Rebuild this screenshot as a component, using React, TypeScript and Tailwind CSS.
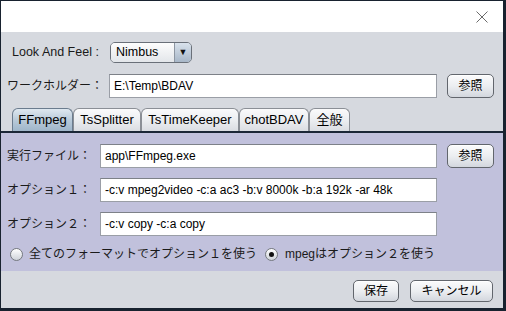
const font = { fontFamily: '"Liberation Sans", "Noto Sans CJK JP", sans-serif' };

const Field = (props: { value: string; className?: string }) => (
  <div
    className={`h-[24px] flex items-center px-[4px] bg-white border border-[#9a9ea6] border-t-[#7d8188] text-[12px] text-black whitespace-nowrap overflow-hidden ${props.className ?? ""}`}
  >
    {props.value}
  </div>
);

const Button = (props: { label: string; className?: string }) => (
  <div
    className={`shrink-0 flex items-center justify-center rounded-[5px] border border-[#62666d] bg-gradient-to-b from-[#fbfbfc] via-[#eceef1] to-[#d3d7de] text-[12px] text-black shadow-[inset_0_1px_0_#ffffff] whitespace-nowrap ${props.className ?? ""}`}
  >
    {props.label}
  </div>
);

const Tab = (props: { label: string; selected?: boolean; width: string }) => (
  <div
    className={`shrink-0 h-[23px] flex items-center justify-center rounded-t-[6px] border border-b-0 text-[13px] text-black whitespace-nowrap ${props.width} ${
      props.selected
        ? "border-[#6b7c8e] bg-gradient-to-b from-[#dfe8f0] via-[#b9cad9] to-[#9fb6ca]"
        : "border-[#8b8f96] bg-gradient-to-b from-[#fafafb] via-[#eceef1] to-[#dadde2]"
    }`}
  >
    {props.label}
  </div>
);

const Radio = (props: { checked?: boolean }) => (
  <div className="shrink-0 w-[13px] h-[13px] rounded-full border border-[#75797f] bg-gradient-to-b from-[#ffffff] to-[#cfd3da] flex items-center justify-center">
    {props.checked && <div className="w-[5px] h-[5px] rounded-full bg-[#111]" />}
  </div>
);

const Label = (props: { text: string; width: string }) => (
  <span className={`shrink-0 whitespace-nowrap text-[12px] text-[#1a1a1a] ${props.width}`}>{props.text}</span>
);

export default function App() {
  return (
    <div style={font} className="w-[506px] h-[311px] bg-[#18222f] pt-px pl-px pr-[3px] pb-[3px]">
      <div className="flex flex-col h-full bg-[#d6d9df]">
        <div className="shrink-0 h-[31px] bg-white flex items-center justify-end pr-[15px]">
          <svg width="12" height="12" viewBox="0 0 12 12" className="mt-[1px]">
            <path d="M0.5 0.5 L11.5 11.5 M11.5 0.5 L0.5 11.5" stroke="#6a6a6a" strokeWidth="1" />
          </svg>
        </div>

        <div className="shrink-0 flex items-center mt-[10px] pl-[11px] h-[21px]">
          <span className="shrink-0 w-[98px] whitespace-nowrap text-[12.5px] text-[#1a1a1a]">Look And Feel :</span>
          <div className="w-[82px] h-[21px] flex rounded-[5px] border border-[#6a7079] overflow-hidden">
            <div className="flex-1 flex items-center pl-[5px] text-[12.5px] bg-gradient-to-b from-[#fdfdfd] to-[#e3e6ea]">
              Nimbus
            </div>
            <div className="w-[17px] flex items-center justify-center border-l border-[#8d96a2] bg-gradient-to-b from-[#d9e2ec] to-[#a8b7c8] text-[9px] text-[#111]">
              ▼
            </div>
          </div>
        </div>

        <div className="shrink-0 flex items-center mt-[11px] pl-[6px] pr-[9px] gap-[10px]">
          <Label text="ワークホルダー：" width="w-[92px]" />
          <Field value="E:\Temp\BDAV" className="flex-1" />
          <Button label="参照" className="w-[47px] h-[24px]" />
        </div>

        <div className="shrink-0 flex items-end mt-[10px] pl-[11px] border-b-2 border-[#1b2737]">
          <Tab label="FFmpeg" selected width="w-[61px]" />
          <Tab label="TsSplitter" width="w-[68px]" />
          <Tab label="TsTimeKeeper" width="w-[98px]" />
          <Tab label="chotBDAV" width="w-[70px]" />
          <Tab label="全般" width="w-[41px]" />
        </div>

        <div className="shrink-0 bg-[#c1c1dc] flex flex-col pt-[11px] pl-[6px] pr-[9px] pb-[9px] gap-[10px]">
          <div className="flex items-center gap-[10px]">
            <Label text="実行ファイル：" width="w-[83px]" />
            <Field value="app\FFmpeg.exe" className="flex-1" />
            <Button label="参照" className="w-[47px] h-[24px]" />
          </div>
          <div className="flex items-center gap-[10px] pr-[57px]">
            <Label text="オプション１：" width="w-[83px]" />
            <Field value="-c:v mpeg2video -c:a ac3 -b:v 8000k -b:a 192k -ar 48k" className="flex-1" />
          </div>
          <div className="flex items-center gap-[10px] pr-[57px]">
            <Label text="オプション２：" width="w-[83px]" />
            <Field value="-c:v copy -c:a copy" className="flex-1 h-[23px]" />
          </div>
          <div className="flex items-center h-[16px] pl-[3px] text-[12px] text-[#1a1a1a] whitespace-nowrap">
            <Radio />
            <span className="ml-[6px] w-[236px] shrink-0">全てのフォーマットでオプション１を使う</span>
            <Radio checked />
            <span className="ml-[7px]">mpegはオプション２を使う</span>
          </div>
        </div>

        <div className="shrink-0 flex justify-end items-center gap-[11px] pr-[10px] mt-[9px]">
          <Button label="保存" className="w-[46px] h-[22px]" />
          <Button label="キャンセル" className="w-[83px] h-[22px]" />
        </div>
      </div>
    </div>
  );
}
